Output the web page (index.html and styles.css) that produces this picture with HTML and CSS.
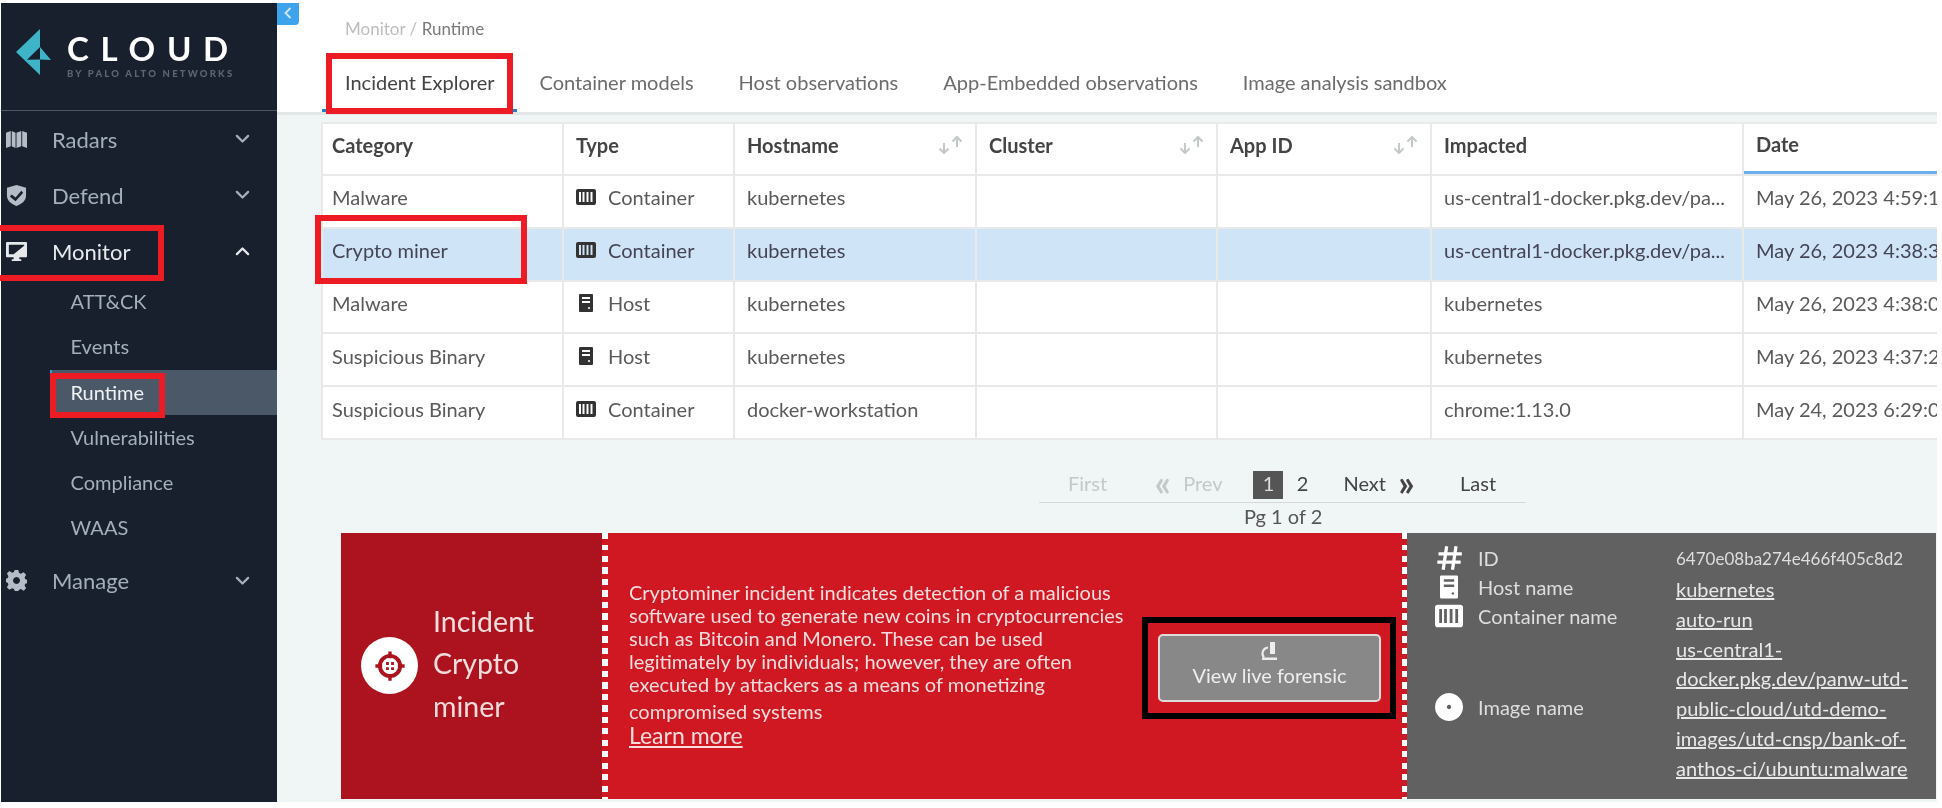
FILE: index.html
```html
<!DOCTYPE html>
<html lang="en">
<head>
<meta charset="utf-8">
<title>Monitor / Runtime</title>
<link rel="stylesheet" href="styles.css">
</head>
<body>
<svg class="defs" width="0" height="0" aria-hidden="true">
  <symbol id="i-container" viewBox="0 0 20 16"><path fill="currentColor" fill-rule="evenodd" d="M2 0h16a2 2 0 0 1 2 2v12a2 2 0 0 1-2 2H2a2 2 0 0 1-2-2V2a2 2 0 0 1 2-2zM3 3v10h2V3zm3.500 0v10h2V3zm4 0v10h2V3zm4 0v10h2V3z"/></symbol>
  <symbol id="i-host" viewBox="0 0 14 18"><path fill="currentColor" fill-rule="evenodd" d="M1 0h12a1 1 0 0 1 1 1v16a1 1 0 0 1-1 1H1a1 1 0 0 1-1-1V1a1 1 0 0 1 1-1zM3 3v2h8V3zm0 4v2h8V7zm7 6a1 1 0 1 0 .01 0z"/></symbol>
  <symbol id="i-down" viewBox="0 0 12 8"><path fill="none" stroke="currentColor" stroke-width="1.800" stroke-linecap="round" stroke-linejoin="round" d="M1.500 1.500 6 6l4.500-4.500"/></symbol>
  <symbol id="i-up" viewBox="0 0 12 8"><path fill="none" stroke="currentColor" stroke-width="1.800" stroke-linecap="round" stroke-linejoin="round" d="M1.500 6.500 6 2l4.500 4.500"/></symbol>
  <symbol id="i-sort" viewBox="0 0 26 18"><path fill="none" stroke="currentColor" stroke-width="2" d="M6 7v10M1.500 12.500 6 17l4.500-4.500M19 1v10M14.500 5.500 19 1l4.500 4.500"/></symbol>
</svg>

<div class="page">
  <aside class="sidebar">
    <div class="brand">
      <svg class="brand-mark" viewBox="0 0 36 46" aria-hidden="true">
        <path fill="#3db4c8" d="M24 0v18l11 13-11-.5V46L0 23z"/>
        <path fill="#19202d" d="M24 18v12.500l-13 .2z"/>
      </svg>
      <div class="brand-text">
        <div class="brand-name">CLOUD</div>
        <div class="brand-sub">BY PALO ALTO NETWORKS</div>
      </div>
    </div>
    <nav class="nav">
      <div class="nav-item">
        <svg class="nav-icon" viewBox="0 0 22 18" aria-hidden="true"><path fill="currentColor" d="M0 2l5-2v16l-5 2zM6 0l4 2v16l-4-2zM11 2l5-2v16l-5 2zM17 0l5 2v16l-5-2z"/></svg>
        <span class="nav-label">Radars</span>
        <svg class="nav-caret"><use href="#i-down"/></svg>
      </div>
      <div class="nav-item">
        <svg class="nav-icon" viewBox="0 0 20 22" aria-hidden="true"><path fill="currentColor" fill-rule="evenodd" d="M10 0l10 3v8c0 6-5 9-10 11C5 20 0 17 0 11V3zM5 10l-2 2 6 5 8-9-2-2-6 7z"/></svg>
        <span class="nav-label">Defend</span>
        <svg class="nav-caret"><use href="#i-down"/></svg>
      </div>
      <div class="nav-item is-open">
        <svg class="nav-icon" viewBox="0 0 22 20" aria-hidden="true"><path fill="currentColor" fill-rule="evenodd" d="M1 0h20a1 1 0 0 1 1 1v14a1 1 0 0 1-1 1h-7v2h2v2H6v-2h2v-2H1a1 1 0 0 1-1-1V1a1 1 0 0 1 1-1zM3 13h5l11-9V3H3z"/></svg>
        <span class="nav-label">Monitor</span>
        <svg class="nav-caret"><use href="#i-up"/></svg>
      </div>
      <ul class="subnav">
        <li class="subnav-item">ATT&amp;CK</li>
        <li class="subnav-item">Events</li>
        <li class="subnav-item is-active">Runtime</li>
        <li class="subnav-item">Vulnerabilities</li>
        <li class="subnav-item">Compliance</li>
        <li class="subnav-item">WAAS</li>
      </ul>
      <div class="nav-item nav-item-last">
        <svg class="nav-icon" viewBox="0 0 24 24" aria-hidden="true"><path fill="currentColor" fill-rule="evenodd" d="M10 0h4l1 3.500 2 .9 3.200-1.800 2.800 2.800L21.200 8.600l.9 2L24 11v4l-2 .6-.8 2 1.800 3.200-2.800 2.800-3.200-1.800-2 .8L14 24h-4l-.9-2.400-2-.8-3.300 1.800L1 19.800l1.800-3.200-.8-2L0 14v-4l2-.8.800-2L1 4l2.800-2.800L7 3l2-.8zM12 8a4 4 0 1 0 .01 0z"/></svg>
        <span class="nav-label">Manage</span>
        <svg class="nav-caret"><use href="#i-down"/></svg>
      </div>
    </nav>
  </aside>

  <main class="main">
    <button class="collapse" aria-label="Collapse menu"><svg viewBox="0 0 8 12" aria-hidden="true"><path fill="none" stroke="currentColor" stroke-width="1.800" d="M6.500 1 1.500 6l5 5"/></svg></button>
    <header class="topbar">
      <div class="crumbs">Monitor / <b>Runtime</b></div>
      <div class="tabs">
        <span class="tab is-active">Incident Explorer</span>
        <span class="tab">Container models</span>
        <span class="tab">Host observations</span>
        <span class="tab">App-Embedded observations</span>
        <span class="tab">Image analysis sandbox</span>
      </div>
    </header>

    <section class="content">
      <div class="table">
        <div class="row row-head">
          <div class="cell">Category</div>
          <div class="cell">Type</div>
          <div class="cell cell-sort">Hostname<svg class="sort"><use href="#i-sort"/></svg></div>
          <div class="cell cell-sort">Cluster<svg class="sort"><use href="#i-sort"/></svg></div>
          <div class="cell cell-sort">App ID<svg class="sort"><use href="#i-sort"/></svg></div>
          <div class="cell">Impacted</div>
          <div class="cell cell-date">Date</div>
        </div>
        <div class="row">
          <div class="cell">Malware</div>
          <div class="cell"><svg class="type-icon"><use href="#i-container"/></svg>Container</div>
          <div class="cell">kubernetes</div><div class="cell"></div><div class="cell"></div>
          <div class="cell">us-central1-docker.pkg.dev/pa...</div>
          <div class="cell">May 26, 2023 4:59:19 PM</div>
        </div>
        <div class="row is-selected">
          <div class="cell">Crypto miner</div>
          <div class="cell"><svg class="type-icon"><use href="#i-container"/></svg>Container</div>
          <div class="cell">kubernetes</div><div class="cell"></div><div class="cell"></div>
          <div class="cell">us-central1-docker.pkg.dev/pa...</div>
          <div class="cell">May 26, 2023 4:38:31 PM</div>
        </div>
        <div class="row">
          <div class="cell">Malware</div>
          <div class="cell"><svg class="type-icon type-host"><use href="#i-host"/></svg>Host</div>
          <div class="cell">kubernetes</div><div class="cell"></div><div class="cell"></div>
          <div class="cell">kubernetes</div>
          <div class="cell">May 26, 2023 4:38:05 PM</div>
        </div>
        <div class="row">
          <div class="cell">Suspicious Binary</div>
          <div class="cell"><svg class="type-icon type-host"><use href="#i-host"/></svg>Host</div>
          <div class="cell">kubernetes</div><div class="cell"></div><div class="cell"></div>
          <div class="cell">kubernetes</div>
          <div class="cell">May 26, 2023 4:37:24 PM</div>
        </div>
        <div class="row">
          <div class="cell">Suspicious Binary</div>
          <div class="cell"><svg class="type-icon"><use href="#i-container"/></svg>Container</div>
          <div class="cell">docker-workstation</div><div class="cell"></div><div class="cell"></div>
          <div class="cell">chrome:1.13.0</div>
          <div class="cell">May 24, 2023 6:29:02 PM</div>
        </div>
      </div>

      <div class="pager">
        <div class="pager-bar">
          <span class="pg pg-off pg-first">First</span>
          <span class="pg pg-off pg-prev"><span class="chev">«</span>Prev</span>
          <span class="pg-num is-current">1</span>
          <span class="pg-num">2</span>
          <span class="pg pg-next">Next<span class="chev">»</span></span>
          <span class="pg pg-last">Last</span>
        </div>
        <div class="pager-count">Pg 1 of 2</div>
      </div>

      <div class="incident">
        <div class="inc-title">
          <span class="inc-badge"><svg viewBox="0 0 32 32" aria-hidden="true"><circle cx="16" cy="16" r="9" fill="none" stroke="#ad131e" stroke-width="3.500"/><path fill="#ad131e" d="M14.500 3h3v6h-3zM14.500 23h3v6h-3zM3 14.500h6v3H3zM23 14.500h6v3h-6zM12.500 12.500h2.500v2.500h-2.500zM17 12.500h2.500v2.500H17zM12.500 17h2.500v2.500h-2.500zM17 17h2.500v2.500H17z"/></svg></span>
          <div class="inc-name">Incident<br>Crypto<br>miner</div>
        </div>
        <div class="inc-sep"></div>
        <div class="inc-desc">
          <div class="inc-copy">
            <p class="inc-text">Cryptominer incident indicates detection of a malicious<br>software used to generate new coins in cryptocurrencies<br>such as Bitcoin and Monero. These can be used<br>legitimately by individuals; however, they are often<br>executed by attackers as a means of monetizing</p>
            <p class="inc-last">compromised systems</p>
            <a class="inc-learn" href="#">Learn more</a>
          </div>
          <button class="forensic">
            <svg viewBox="0 0 22 20" aria-hidden="true"><path fill="none" stroke="currentColor" stroke-width="2" d="M9 6.500a6 6 0 0 0-4 10"/><path fill="currentColor" d="M11 1h5v12h-5zM3 16.500h15v2.500H3z"/></svg>
            View live forensic
          </button>
        </div>
        <div class="inc-sep"></div>
        <div class="inc-meta">
          <div class="meta-labels">
            <div class="meta-row meta-id"><svg class="meta-icon" viewBox="0 0 24 24" aria-hidden="true"><path fill="none" stroke="currentColor" stroke-width="2.800" d="M10 2 7 22M18 2l-3 20M3 8.500h20M2 15.500h20"/></svg>ID</div>
            <div class="meta-row meta-host"><svg class="meta-icon meta-icon-host"><use href="#i-host"/></svg>Host name</div>
            <div class="meta-row meta-cont"><svg class="meta-icon meta-icon-cont"><use href="#i-container"/></svg>Container name</div>
            <div class="meta-row meta-img"><svg class="meta-icon" viewBox="0 0 26 26" aria-hidden="true"><path fill="currentColor" fill-rule="evenodd" d="M13 0a13 13 0 1 0 .01 0zM13 11a2 2 0 1 1-.01 0z"/></svg>Image name</div>
          </div>
          <div class="meta-values">
            <div class="meta-hash">6470e08ba274e466f405c8d2</div>
            <a href="#">kubernetes</a>
            <a href="#">auto-run</a>
            <a href="#">us-central1-<br>docker.pkg.dev/panw-utd-<br>public-cloud/utd-demo-<br>images/utd-cnsp/bank-of-<br>anthos-ci/ubuntu:malware</a>
          </div>
        </div>
      </div>
    </section>
  </main>

  <span class="mark mark-monitor"></span>
  <span class="mark mark-runtime"></span>
  <span class="mark mark-tab"></span>
  <span class="mark mark-row"></span>
  <span class="mark mark-button"></span>
</div>
</body>
</html>
```

FILE: styles.css
```css
* { box-sizing: border-box; }
html, body { margin: 0; height: 100%; background: #fff; }
body { font-family: Lato, "Open Sans", "Liberation Sans", sans-serif; overflow: hidden; }
.defs { position: absolute; }

.page { position: relative; width: 1942px; height: 808px; padding: 3px 5px 6px 1px; display: flex; background: #fff; filter: blur(.55px); overflow: hidden; }

/* sidebar */
.sidebar { width: 276px; flex: none; background: #19202d; color: #a3afbb; }
.brand { height: 108px; border-bottom: 1px solid #4a5563; display: flex; padding: 26px 0 0 15px; gap: 15px; }
.brand-mark { width: 36px; height: 46px; flex: none; }
.brand-name { font-size: 33px; line-height: 36px; font-weight: 700; letter-spacing: 11.700px; color: #fff; margin-top: 1px; }
.brand-sub { font-size: 9.500px; line-height: 12px; font-weight: 900; letter-spacing: 2.200px; color: #5c6673; margin-top: 2px; white-space: nowrap; }
.nav { padding-top: 0; }
.nav-item { height: 56px; display: flex; align-items: center; padding: 0 27px 0 5px; font-size: 22px; }
.nav-icon { width: 21px; height: 21px; color: #b4bdc7; flex: none; }
.nav-label { margin-left: 25px; flex: 1; }
.nav-caret { width: 15px; height: 10px; color: #a3afbb; }
.is-open { color: #e6e9ec; }
.is-open .nav-icon, .is-open .nav-caret { color: #e6e9ec; }
.subnav { list-style: none; margin: 0; padding: 0 0 0 49px; }
.subnav-item { height: 45.300px; line-height: 45px; font-size: 20px; padding-left: 18.500px; border-left: 2px solid transparent; }
.subnav-item.is-active { background: #4b5867; color: #f0f2f4; border-left-color: #3a9bdc; }
.nav-item-last { margin-top: 2px; }

/* main */
.main { position: relative; flex: 1; min-width: 0; display: flex; flex-direction: column; background: #f0f5f5; }
.collapse { position: absolute; left: 0; top: 0; width: 22px; height: 22px; padding: 0 0 3px 0; border: 0; background: #3da4ec; border-radius: 0 0 4px 0; color: #cfe6f8; }
.collapse svg { width: 8px; height: 12px; display: block; margin: 0 auto; }
.topbar { height: 112px; flex: none; background: #fff; border-bottom: 3px solid #e3e6e6; padding-left: 68px; }
.crumbs { font-size: 17px; line-height: 20px; padding-top: 16px; height: 36px; color: #bdbdbd; }
.crumbs b { font-weight: 400; color: #7a7a7a; }
.tabs { display: flex; margin: 18px 0 0 -23px; }
.tab { height: 55px; line-height: 50px; padding: 0 22.500px; font-size: 20px; color: #6c6c6c; white-space: nowrap; }
.tab.is-active { color: #444; border-bottom: 3px solid #1f7ed0; padding-left: 23px; }

.content { flex: 1; min-height: 0; padding-top: 7px; padding-left: 44px; overflow: hidden; }
.table { background: #fff; border: 2px solid #e8eaea; border-right: 0; overflow: hidden; }
.row { display: grid; grid-template-columns: 241px 171px 242px 241px 214px 312px 1fr; height: 52.800px; border-top: 2px solid #e8eaea; }
.row:first-child { border-top: 0; height: 50px; }
.cell { display: flex; align-items: center; padding: 0 0 8px 9px; font-size: 20px; color: #5a5a5a; white-space: nowrap; overflow: hidden; border-right: 2px solid #e8eaea; }
.cell:nth-child(n+2) { padding-left: 12px; }
.cell:last-child { border-right: 0; }
.row-head .cell { font-weight: 700; color: #444; padding-bottom: 8px; }
.cell-date { border-bottom: 3px solid #6ab0ec; }
.cell-sort { justify-content: space-between; padding-right: 11px; }
.sort { width: 26px; height: 18px; color: #c4c8c8; flex: none; }
.is-selected { background: #d0e4f8; }
.is-selected .cell { color: #445; }
.type-icon { width: 20px; height: 16px; color: #333; margin-right: 12px; flex: none; }
.type-host { width: 14px; height: 18px; margin: 0 15px 0 3px; }

/* pager */
.pager { margin-top: 31px; padding-left: 718px; height: 62px; }
.pager-bar { width: 487px; height: 32px; border-bottom: 1px solid #d8d8d8; display: flex; align-items: flex-start; font-size: 20px; color: #444; }
.pg, .pg-num { line-height: 25px; }
.pg-off { color: #c4c8c8; }
.chev { width: 17px; font-size: 36px; line-height: 22px; text-align: center; font-weight: 700; }
.pg-first { margin-left: 29px; }
.pg-prev { margin-left: 47px; display: flex; gap: 12px; }
.pg-num { width: 30px; height: 28px; text-align: center; flex: none; }
.pg-num.is-current { margin-left: 31px; background: #555; color: #ddd; }
.pg-num + .pg-num { margin-left: 4px; }
.pg-next { margin-left: 26px; display: flex; gap: 12px; }
.pg-last { margin-left: 45px; }
.pager-count { width: 487px; padding-left: 205px; font-size: 20px; line-height: 26px; color: #555; }

/* incident */
.incident { display: grid; grid-template-columns: 261px 6px 794px 5px 1fr; height: 266px; margin: 0 1px 0 20px; color: #fff; }
.inc-title { background: #ad131e; display: flex; align-items: center; padding-left: 20px; gap: 15px; }
.inc-badge { width: 57px; height: 57px; border-radius: 50%; background: #fff; display: grid; place-items: center; flex: none; }
.inc-badge svg { width: 36px; height: 36px; }
.inc-name { font-size: 28.500px; line-height: 42.500px; color: #f3dcdd; padding-bottom: 5px; }
.inc-sep { background: repeating-linear-gradient(#fff 0 6px, #d01823 6px 11.500px); }
.inc-desc { background: #d01823; display: flex; padding-left: 21px; }
.inc-copy { width: 510px; padding-top: 48px; font-size: 20px; color: #f8dcde; white-space: nowrap; }
.inc-text { margin: 0; line-height: 23px; }
.inc-last { margin: 3px 0 0; line-height: 24px; }
.inc-learn { display: block; font-size: 23px; line-height: 25px; color: #f8dcde; }
.forensic { margin: 101px 0 0 19px; width: 223px; height: 68px; border: 2px solid #dcdcdc; border-radius: 5px; background: #888; color: #eee; font: 20px Lato, sans-serif; display: flex; flex-direction: column; align-items: center; padding: 5px 0 0; line-height: 24px; }
.forensic svg { width: 22px; height: 20px; display: block; margin-bottom: 2px; }
.inc-meta { background: #616161; display: flex; font-size: 20px; color: #dedede; }
.meta-labels { width: 269px; padding: 11px 0 0 28px; }
.meta-row { display: flex; align-items: center; gap: 15px; height: 29px; }
.meta-icon { width: 28px; height: 28px; color: #fff; flex: none; }
.meta-icon-host { width: 18px; height: 28px; margin: 0 5px; }
.meta-icon-cont { width: 28px; height: 24px; }
.meta-img { margin-top: 62px; }
.meta-values { padding-top: 13px; display: flex; flex-direction: column; white-space: nowrap; font-size: 20px; }
.meta-values a { color: #e8e8e8; line-height: 29.800px; }
.meta-hash { font-size: 17px; line-height: 26px; margin-bottom: 3px; }

/* annotation rectangles over the screenshot */
.mark { position: absolute; border: 6px solid #ed1c24; pointer-events: none; }
.mark-monitor { left: -6px; top: 225px; width: 170px; height: 56px; }
.mark-runtime { left: 50px; top: 373px; width: 115px; height: 45px; }
.mark-tab { left: 326px; top: 53px; width: 187px; height: 61px; }
.mark-row { left: 315px; top: 215px; width: 212px; height: 69px; }
.mark-button { left: 1142px; top: 617px; width: 254px; height: 102px; border-color: #000; }
```
